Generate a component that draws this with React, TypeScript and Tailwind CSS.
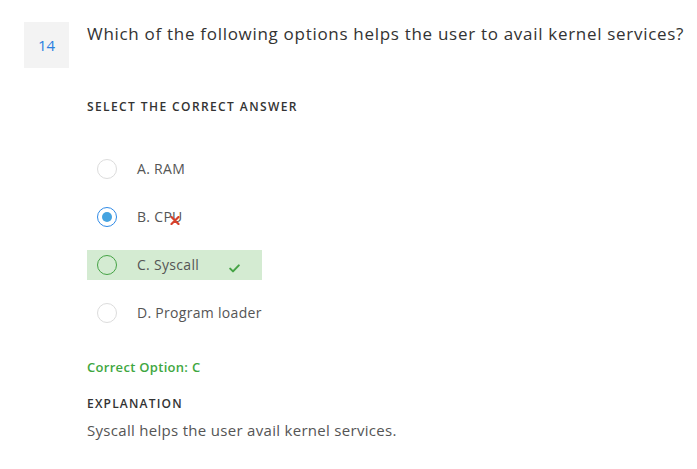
import React from "react";

const font = { fontFamily: '"Open Sans", "Liberation Sans", sans-serif' };

function Radio({ state }: { state: "empty" | "selected" | "correct" }) {
  if (state === "selected")
    return (
      <span className="flex h-[20px] w-[20px] shrink-0 items-center justify-center rounded-full border-[1.5px] border-[#2f8ae6]">
        <span className="h-[10px] w-[10px] rounded-full bg-[#45a3e0]" />
      </span>
    );
  if (state === "correct")
    return <span className="h-[20px] w-[20px] shrink-0 rounded-full border-[1.5px] border-[#45a345]" />;
  return <span className="h-[20px] w-[20px] shrink-0 rounded-full border border-[#dcdcdc]" />;
}

export default function App() {
  return (
    <div className="min-h-[469px] w-[697px] bg-white" style={font}>
      <div className="flex pl-[24px] pt-[22px]">
        <div className="flex h-[46px] w-[45px] shrink-0 items-center justify-center bg-[#f3f3f3] text-[15px] text-[#2b7fe0]">
          14
        </div>
        <div className="ml-[18px] flex flex-col">
          <div className="whitespace-nowrap text-[17px] leading-[24px] tracking-[0.7px] text-[#333]">
            Which of the following options helps the user to avail kernel services?
          </div>
          <div className="mt-[53px] text-[12px] font-semibold leading-[16px] tracking-[1.4px] text-[#333]">
            SELECT THE CORRECT ANSWER
          </div>
          <div className="mt-[39px] flex flex-col gap-[18px]">
            <div className="flex h-[30px] w-[175px] items-center pl-[10px]">
              <Radio state="empty" />
              <span className="ml-[20px] text-[14px] leading-[20px] tracking-[0.3px] text-[#555]">A. RAM</span>
            </div>
            <div className="flex h-[30px] w-[175px] items-center pl-[10px]">
              <Radio state="selected" />
              <span className="relative ml-[20px] text-[14px] leading-[20px] tracking-[0.3px] text-[#555]">
                B. CPU
                <svg
                  className="absolute left-[33px] top-[9px]"
                  width="10"
                  height="9"
                  viewBox="0 0 10 9"
                >
                  <path d="M1.5 1 L8.5 8 M8.5 1 L1.5 8" stroke="#d6402b" strokeWidth="2.2" strokeLinecap="round" />
                </svg>
              </span>
            </div>
            <div className="flex h-[30px] w-[175px] items-center bg-[#d4ebd2] pl-[10px]">
              <Radio state="correct" />
              <span className="ml-[20px] text-[14px] leading-[20px] tracking-[0.3px] text-[#555]">C. Syscall</span>
              <svg className="ml-[30px] mt-[7px]" width="11" height="9" viewBox="0 0 11 9">
                <path d="M1.2 4.6 L4 7.4 L9.8 1.4" stroke="#45a345" strokeWidth="2" fill="none" strokeLinecap="round" strokeLinejoin="round" />
              </svg>
            </div>
            <div className="flex h-[30px] w-[175px] items-center pl-[10px]">
              <Radio state="empty" />
              <span className="ml-[20px] whitespace-nowrap text-[14px] leading-[20px] tracking-[0.3px] text-[#555]">D. Program loader</span>
            </div>
          </div>
          <div className="mt-[30px] text-[13px] font-semibold leading-[18px] tracking-[0.3px] text-[#3fa73f]">
            Correct Option: C
          </div>
          <div className="mt-[20px] text-[12px] font-semibold leading-[16px] tracking-[1.2px] text-[#333]">
            EXPLANATION
          </div>
          <div className="mt-[8px] text-[15px] leading-[20px] tracking-[0.3px] text-[#555]">
            Syscall helps the user avail kernel services.
          </div>
        </div>
      </div>
    </div>
  );
}
